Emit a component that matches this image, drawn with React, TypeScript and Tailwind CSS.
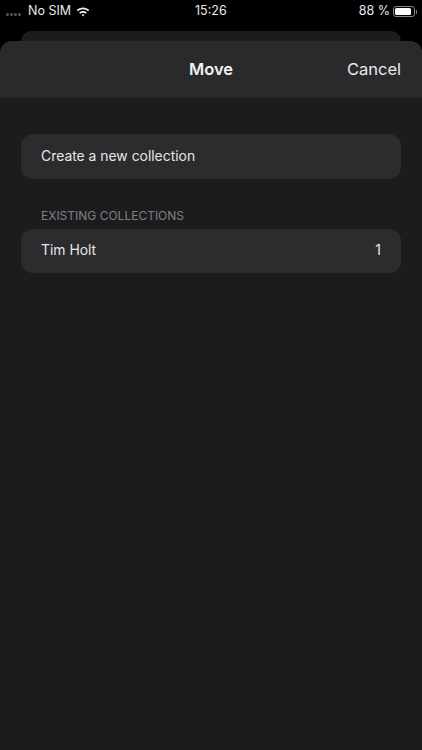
export default function App() {
  return (
    <div className="w-[422px] h-[750px] bg-black flex flex-col overflow-hidden text-white" style={{ fontFamily: '"Inter", "Liberation Sans", sans-serif' }}>
      <div className="h-[20px] pt-[3px] flex items-center justify-between shrink-0 relative text-[12.5px] leading-none text-[#e8e8e8]">
        <div className="flex items-center ml-[6px]">
          <div className="flex items-center gap-[1px] mt-[5px] w-[22px]">
            <span className="w-[3px] h-[3px] rounded-full bg-[#555]" />
            <span className="w-[3px] h-[3px] rounded-full bg-[#555]" />
            <span className="w-[3px] h-[3px] rounded-full bg-[#555]" />
            <span className="w-[3px] h-[3px] rounded-full bg-[#555]" />
          </div>
          <span>No SIM</span>
          <svg className="ml-[5px]" width="14" height="10" viewBox="0 0 15 11" fill="#eee">
            <path d="M7.5 0.5C4.8 0.5 2.4 1.5 0.5 3.2L1.9 4.7C3.4 3.3 5.4 2.5 7.5 2.5s4.1 0.8 5.6 2.2l1.4-1.5C12.6 1.5 10.2 0.5 7.5 0.5z" />
            <path d="M7.5 4.4c-1.6 0-3.1 0.6-4.2 1.6l1.4 1.5c0.8-0.7 1.8-1.1 2.8-1.1s2 0.4 2.8 1.1l1.4-1.5C10.6 5 9.1 4.4 7.5 4.4z" />
            <path d="M7.5 8c-0.7 0-1.2 0.2-1.7 0.6l1.7 1.9 1.7-1.9C8.7 8.2 8.2 8 7.5 8z" />
          </svg>
        </div>
        <span className="absolute left-[195px]">15:26</span>
        <div className="flex items-center mr-[5px]">
          <span>88 %</span>
          <div className="ml-[3px] w-[22px] h-[11px] rounded-[3px] border border-[#888] p-[1px]">
            <div className="h-full w-[88%] bg-white rounded-[1.5px]" />
          </div>
          <div className="w-[1.5px] h-[4px] bg-[#888] rounded-r-sm ml-[0.5px]" />
        </div>
      </div>
      <div className="h-[10px] mt-[11px] mx-[21px] bg-[#1c1c1e] rounded-t-[10px] shrink-0" />
      <div className="flex-1 bg-[#1c1c1e] rounded-t-[12px] flex flex-col">
        <div className="h-[57px] shrink-0 pt-[1px] bg-[#2a2a2c] rounded-t-[12px] border-b border-[#232325] flex items-center justify-center relative">
          <span className="text-[16.5px] font-semibold text-[#f2f2f2]">Move</span>
          <span className="absolute right-[21px] text-[16.5px] text-[#ebebeb]">Cancel</span>
        </div>
        <div className="px-[21px] pt-[36px] flex flex-col">
          <div className="h-[44.5px] rounded-[12px] bg-[#2c2c2e] flex items-center px-[20px] text-[13.9px] text-[#e6e6e6]">Create a new collection</div>
          <div className="mt-[27px] h-[23px] pb-[3px] pl-[20px] flex items-center text-[12px] text-[#808083]">EXISTING COLLECTIONS</div>
          <div className="h-[44.5px] rounded-[12px] bg-[#2c2c2e] flex items-center justify-between px-[20px] text-[13.9px] text-[#e6e6e6]">
            <span>Tim Holt</span>
            <span>1</span>
          </div>
        </div>
      </div>
    </div>
  );
}
